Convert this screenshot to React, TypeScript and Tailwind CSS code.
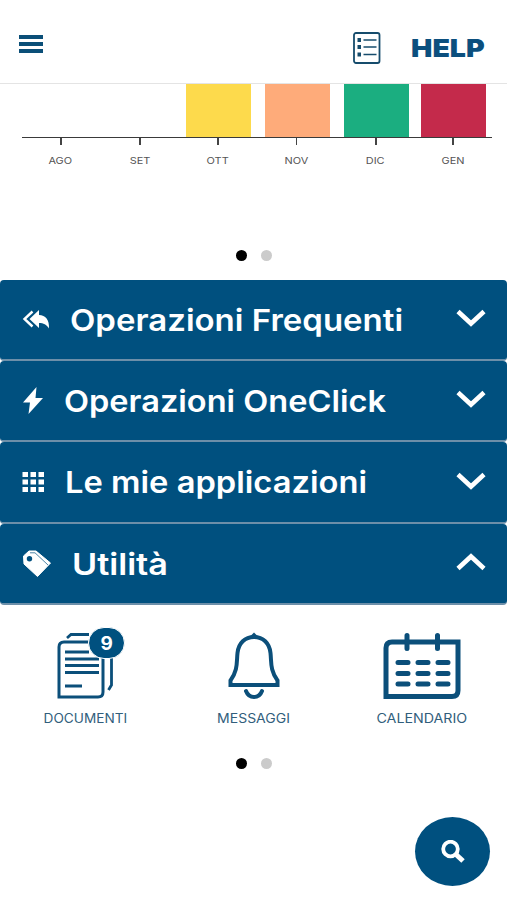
import type { ReactNode } from 'react'
import clsx from 'clsx'

const months = [
  { label: 'AGO', cell: 'w-[79px]', bar: '' },
  { label: 'SET', cell: 'w-[79px]', bar: '' },
  { label: 'OTT', cell: 'w-[77px]', bar: 'bg-[#fdda4c]' },
  { label: 'NOV', cell: 'w-[80px]', bar: 'bg-[#feab7a]' },
  { label: 'DIC', cell: 'w-[79px]', bar: 'bg-[#1bae80]' },
  { label: 'GEN', cell: 'w-[75px]', bar: 'bg-[#c42a4b]' },
]

function Dots() {
  return (
    <div className="flex justify-center gap-[14px]">
      <span className="size-[11px] rounded-full bg-black" />
      <span className="size-[11px] rounded-full bg-[#cbcbcb]" />
    </div>
  )
}

function Header() {
  return (
    <header className="flex h-[84px] items-start border-b border-[#e4e4e4]">
      <div className="ml-[19px] mt-[35px] flex w-6 flex-col gap-[3px]">
        <span className="h-1 bg-[#0b4f78]" />
        <span className="h-1 bg-[#0b4f78]" />
        <span className="h-1 bg-[#0b4f78]" />
      </div>
      <svg className="ml-[310px] mt-8 h-8 w-7" viewBox="0 0 28 32" fill="none" stroke="#164c6c">
        <rect x="1" y="1" width="25.5" height="30" rx="2" strokeWidth="1.8" />
        <path d="M10.500 8h13M10.500 15h13M10.500 22.500h13" strokeWidth="1.600" />
        <path d="M4.500 8H8M4.500 15H8M4.500 22.500H8" strokeWidth="3.800" />
      </svg>
      <span className="ml-[30px] mt-[33px] origin-left scale-x-[1.14] whitespace-nowrap text-[25px] font-black leading-[30px] text-[#0b4f7e]">
        HELP
      </span>
    </header>
  )
}

function Chart() {
  return (
    <section className="h-[166px]">
      <div className="ml-[22px] flex h-[53px] w-[470px]">
        {months.map((m) => (
          <div key={m.label} className={clsx('flex shrink-0 justify-center', m.cell)}>
            <div className={clsx('w-[65px]', m.bar)} />
          </div>
        ))}
      </div>
      <div className="ml-[22px] flex w-[470px] border-t border-[#3a3a3a]">
        {months.map((m) => (
          <div key={m.label} className={clsx('flex shrink-0 flex-col items-center', m.cell)}>
            <span className="mr-px h-[7px] w-[1.5px] bg-[#444]" />
            <span className="mr-[2px] mt-[10px] scale-x-[1.15] text-[9.5px] leading-3 text-[#555]">{m.label}</span>
          </div>
        ))}
      </div>
    </section>
  )
}

function Row({ icon, title, text, height, open }: {
  icon: ReactNode
  title: string
  text: string
  height: string
  open?: boolean
}) {
  return (
    <div
      className={clsx(
        'flex items-center rounded-[4px] border-b-2 border-[#6d8fa9] bg-[#00507f] pl-[22px] pr-[21px] text-white',
        height,
      )}
    >
      {icon}
      <span className={clsx('origin-left whitespace-nowrap text-[30px] font-semibold leading-9', text)}>{title}</span>
      <svg
        className={clsx('ml-auto h-[18px] w-[30px]', open ? 'mb-[3px] rotate-180' : 'mb-[3px]')}
        viewBox="0 0 30 18"
        fill="none"
        stroke="currentColor"
        strokeWidth="4.6"
      >
        <path d="M2 2.500 15 14.500 28 2.500" />
      </svg>
    </div>
  )
}

function Tile({ icon, label, text }: { icon: ReactNode; label: string; text: string }) {
  return (
    <div className="flex w-[168.500px] flex-col items-center">
      {icon}
      <span className={clsx('mt-[6px] whitespace-nowrap text-[12.5px] leading-4 text-[#315e7c]', text)}>{label}</span>
    </div>
  )
}

export default function App() {
  return (
    <div className="flex h-[900px] w-[507px] flex-col overflow-hidden bg-white font-['Inter',sans-serif]">
      <Header />
      <Chart />
      <Dots />
      <section className="mt-[19px]">
        <Row
          title="Operazioni Frequenti"
          height="h-[81px]"
          text="ml-[20px] scale-x-[1.1]"
          icon={
            <svg className="h-7 w-7" viewBox="0 0 28 28" fill="currentColor">
              <path d="M17 4v5c6.500 0 10.500 5 10 13.500C24.500 18.500 21.500 17 17 17v5L7.500 13z" />
              <path d="M10.500 5.500 2.500 13l8 7.500" fill="none" stroke="currentColor" strokeWidth="2.400" />
            </svg>
          }
        />
        <Row
          title="Operazioni OneClick"
          height="h-[81px]"
          text="ml-[20px] scale-x-[1.085]"
          icon={
            <svg className="h-7 w-[22px]" viewBox="0 0 22 28" fill="currentColor">
              <path d="M14.500 0 1 15.500h7L6.500 27l14.500-16h-7.500z" />
            </svg>
          }
        />
        <Row
          title="Le mie applicazioni"
          height="h-[82px]"
          text="ml-[21px] scale-x-[1.09]"
          icon={
            <svg className="h-[22px] w-[22px]" viewBox="0 0 22 22" fill="currentColor">
              <path d="M.5 1H6v5H.5zM8.500 1H14v5H8.500zM16.500 1H22v5h-5.500zM.5 8.500H6v5H.5zM8.500 8.500H14v5H8.500zM16.500 8.500H22v5h-5.500zM.5 16H6v5H.5zM8.500 16H14v5H8.500zM16.500 16H22v5h-5.500z" />
            </svg>
          }
        />
        <Row
          title="Utilità"
          height="h-[81px]"
          text="ml-[20px] scale-x-[1.14]"
          open
          icon={
            <svg className="h-[30px] w-[30px]" viewBox="0 0 30 30">
              <path
                d="M1.500 7 7 2h7l14.500 12L15.500 27.500 2 15z"
                fill="white"
                stroke="white"
                strokeLinejoin="round"
              />
              <path d="M8 3.800h5L26 16" fill="none" stroke="#00507f" strokeWidth=".7" />
              <circle cx="7.500" cy="9.800" r="2.700" fill="#00507f" />
            </svg>
          }
        />
      </section>

      <section className="mt-[22px] flex justify-between">
        <Tile
          label="DOCUMENTI"
          text="ml-[2px] scale-x-[1.09]"
          icon={
            <div className="relative h-[78px] w-[80px]">
              <svg className="h-full w-full" viewBox="0 0 80 78" fill="none" stroke="#0b4f7a" strokeWidth="3">
                <path d="M44 15H20q-5 0-5 5v50h39q5 0 5-5V24" />
                <path d="M23 11l4-3.500h18M67.500 24v34l-3 5" strokeWidth="2.800" />
                <path d="M21 25h24M21 32h34M21 38.500h34M21 45.500h34M21 59h17" />
              </svg>
              <span className="absolute left-[44px] top-0 flex h-[32px] w-[37px] items-center justify-center rounded-full border border-white bg-[#00507f] text-[19px] font-bold leading-none text-white">
                9
              </span>
            </div>
          }
        />
        <Tile
          label="MESSAGGI"
          text="scale-x-[1.12]"
          icon={
            <svg className="h-[78px] w-[60px]" viewBox="0 0 60 78" fill="none" stroke="#0b4f7a" strokeWidth="4">
              <path d="M6.500 58v-4.500C14 43.500 12.500 35 13.500 26 14.500 16 21 10 30 10s15.500 6 16.500 16c1 9-.5 17.500 7 27.500V58z" />
              <path d="M25.500 10 30 5.500l4.500 4.500z" fill="#0b4f7a" stroke="none" />
              <path d="M22 64c3 8 13 8 16 0" strokeLinecap="round" />
            </svg>
          }
        />
        <Tile
          label="CALENDARIO"
          text="mr-px scale-x-[1.14]"
          icon={
            <svg className="mr-[2px] h-[78px] w-[80px]" viewBox="0 0 80 78" fill="none" stroke="#0b4f7a" strokeWidth="5">
              <path d="M4 69.500V21q0-6 6-6h66v48.500q0 6-6 6z" />
              <path d="M25 8.500v13M55.500 8.500v13" strokeLinecap="round" />
              <path
                d="M16 35.500h10M36 35.500h10M56 35.500h10M16 46.500h10M36 46.500h10M56 46.500h10M16 57h10M36 57h10M56 57h10"
                strokeLinecap="round"
              />
            </svg>
          }
        />
      </section>
      <div className="mt-[31px]">
        <Dots />
      </div>
      <button className="ml-[415px] mt-[48px] flex h-[69px] w-[75px] items-center justify-center rounded-[50%] bg-[#00507f]">
        <svg className="h-6 w-6" viewBox="0 0 24 24" fill="none" stroke="white" strokeWidth="3.800">
          <circle cx="9.500" cy="9" r="7.300" />
          <path d="m14.500 14 7.500 7" strokeWidth="5" />
        </svg>
      </button>
    </div>
  )
}
